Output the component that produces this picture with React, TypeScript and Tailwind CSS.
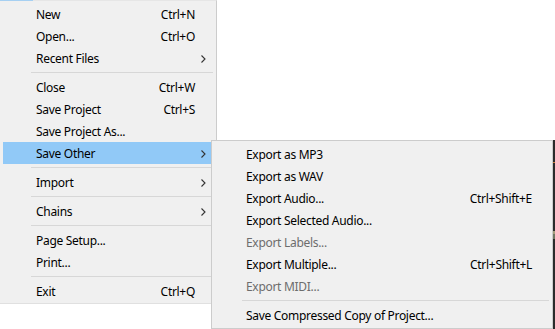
import type { ReactNode } from "react";

type Item =
  | { kind: "sep" }
  | { kind: "item"; label: string; shortcut?: string; sub?: boolean; active?: boolean; disabled?: boolean };

const fileMenu: Item[] = [
  { kind: "item", label: "New", shortcut: "Ctrl+N" },
  { kind: "item", label: "Open...", shortcut: "Ctrl+O" },
  { kind: "item", label: "Recent Files", sub: true },
  { kind: "sep" },
  { kind: "item", label: "Close", shortcut: "Ctrl+W" },
  { kind: "item", label: "Save Project", shortcut: "Ctrl+S" },
  { kind: "item", label: "Save Project As..." },
  { kind: "item", label: "Save Other", sub: true, active: true },
  { kind: "sep" },
  { kind: "item", label: "Import", sub: true },
  { kind: "sep" },
  { kind: "item", label: "Chains", sub: true },
  { kind: "sep" },
  { kind: "item", label: "Page Setup..." },
  { kind: "item", label: "Print..." },
  { kind: "sep" },
  { kind: "item", label: "Exit", shortcut: "Ctrl+Q" },
];

const saveOtherMenu: Item[] = [
  { kind: "item", label: "Export as MP3" },
  { kind: "item", label: "Export as WAV" },
  { kind: "item", label: "Export Audio...", shortcut: "Ctrl+Shift+E" },
  { kind: "item", label: "Export Selected Audio..." },
  { kind: "item", label: "Export Labels...", disabled: true },
  { kind: "item", label: "Export Multiple...", shortcut: "Ctrl+Shift+L" },
  { kind: "item", label: "Export MIDI...", disabled: true },
  { kind: "sep" },
  { kind: "item", label: "Save Compressed Copy of Project..." },
];

function Chevron() {
  return (
    <svg width="5" height="8" viewBox="0 0 5 8" className="block">
      <polyline points="0.5,0.5 4,4 0.5,7.5" fill="none" stroke="#333" strokeWidth="1.1" />
    </svg>
  );
}

function MenuRows({ items, textPad, sepPad }: { items: Item[]; textPad: string; sepPad: string }) {
  const rows: ReactNode[] = items.map((it, i) => {
    if (it.kind === "sep") {
      return (
        <div key={i} className={`h-[7px] flex items-center ${sepPad}`}>
          <div className="h-px w-full bg-[#d7d7d7]" />
        </div>
      );
    }
    return (
      <div
        key={i}
        className={`h-[22px] flex items-center ${textPad} ${it.active ? "bg-[#91c9f7]" : ""} ${
          it.disabled ? "text-[#6d6d6d]" : "text-black"
        }`}
      >
        <span className="flex-1 whitespace-nowrap pt-[2px]">{it.label}</span>
        {it.shortcut && <span className="whitespace-nowrap pt-[2px]">{it.shortcut}</span>}
        <span className="w-[18px] flex justify-end pr-[7px] pt-[1px]">{it.sub && <Chevron />}</span>
      </div>
    );
  });
  return <>{rows}</>;
}

export default function App() {
  return (
    <div
      className="relative w-[555px] h-[329px] bg-white overflow-hidden text-[12px] leading-none tracking-[-0.3px]"
      style={{ fontFamily: '"Segoe UI", "Noto Sans", sans-serif' }}
    >
      {/* File menu */}
      <div className="absolute left-0 top-0 w-[217px] bg-[#f0f0f0] border-t border-t-[#e6e6e6] border-r border-r-[#cccccc] border-b border-b-[#e0e0e0] pt-[2px] pb-[1px] pl-[3px] pr-[3px]">
        <MenuRows items={fileMenu} textPad="pl-[33px]" sepPad="pl-[28px]" />
      </div>
      <div className="absolute left-0 top-0 w-[33px] h-px bg-[#a6d0f2]" />

      {/* Save Other submenu */}
      <div className="absolute left-[211px] top-[140px] w-[342px] h-[189px] bg-[#f0f0f0] border border-[#cccccc] p-[2px]">
        <MenuRows items={saveOtherMenu} textPad="pl-[32px]" sepPad="pl-[28px] pr-[1px]" />
      </div>

      {/* app content peeking at the right edge */}
      <div className="absolute left-[553px] top-[140px] w-[2px] h-[189px] bg-[#2b2b2b] flex flex-col">
        <div className="h-[22px]" />
        <div className="h-px bg-[#c67c3a]" />
        <div className="h-[68px]" />
        <div className="h-[3px] bg-[#a59e7c]" />
        <div className="h-[5px] bg-[#6e7662]" />
      </div>
    </div>
  );
}
